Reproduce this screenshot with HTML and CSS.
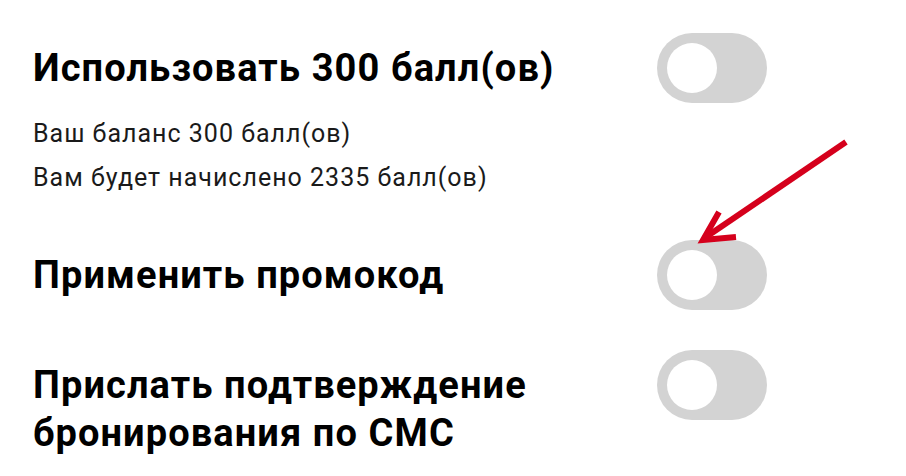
FILE: index.html
```html
<!DOCTYPE html>
<html>
<head>
  <meta charset="UTF-8">
  <title>Бронирование</title>
  <link rel="stylesheet" href="styles.css">
</head>
<body>
  <div class="options">
    <div class="option">
      <div class="option-text">
        <h3>Использовать 300 балл(ов)</h3>
      </div>
      <label class="switch"><input type="checkbox"><span class="knob"></span></label>
    </div>
    <div class="balance">
      <p>Ваш баланс 300 балл(ов)</p>
      <p>Вам будет начислено 2335 балл(ов)</p>
    </div>

    <div class="option">
      <div class="option-text">
        <h3>Применить промокод</h3>
      </div>
      <label class="switch"><input type="checkbox"><span class="knob"></span></label>
    </div>

    <div class="option">
      <div class="option-text">
        <h3>Прислать подтверждение<br>бронирования по СМС</h3>
      </div>
      <label class="switch"><input type="checkbox"><span class="knob"></span></label>
    </div>
  </div>

  <!-- annotation arrow pointing at the promo switch -->
  <svg class="pointer" width="906" height="476" viewBox="0 0 906 476">
    <path d="M846 142 L706 237" stroke="#d5001c" stroke-width="6" fill="none"/>
    <path d="M719 212 L703 240 L736 237" stroke="#d5001c" stroke-width="6" fill="none" stroke-linejoin="miter"/>
  </svg>
</body>
</html>
```

FILE: styles.css
```css
body { margin: 0; font-family: Roboto, "Liberation Sans", sans-serif; background: #fff; color: #000; }
.options { width: 734px; padding: 33px 0 0 33px; }
.option { display: flex; justify-content: space-between; align-items: flex-start; margin-bottom: 40px; }
.option h3 {
  margin: 0;
  padding-top: 11px;
  font-size: 38px;
  line-height: 48px;
  font-weight: 700;
  letter-spacing: 1.1px;
}
.balance { margin: -31px 0 40px; }
.balance p { margin: 0; font-size: 25px; line-height: 44px; color: #1a1a1a; letter-spacing: 1px; }

.switch { position: relative; display: block; width: 110px; height: 70px; flex: none; }
.switch input { display: none; }
.knob {
  display: block;
  width: 110px;
  height: 70px;
  border-radius: 35px;
  background: #d3d3d3;
  position: relative;
}
.knob::before {
  content: "";
  position: absolute;
  left: 10px;
  top: 10px;
  width: 50px;
  height: 50px;
  border-radius: 50%;
  background: #fff;
}

.pointer { position: absolute; left: 0; top: 0; pointer-events: none; }
```
